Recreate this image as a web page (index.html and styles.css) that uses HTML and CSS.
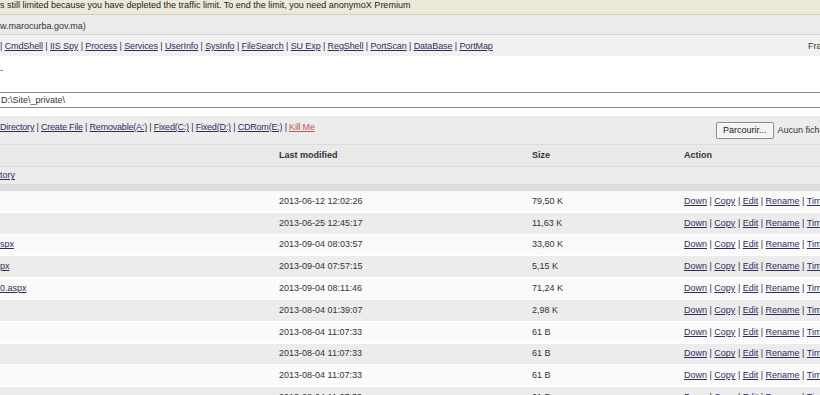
FILE: index.html
```html
<!DOCTYPE html>
<html lang="en">
<head>
    <meta charset="UTF-8">
    <title>File Manager</title>
    <link rel="stylesheet" href="styles.css">
</head>
<body>
    <div class="notice">s still limited because you have depleted the traffic limit. To end the limit, you need anonymoX Premium</div>
    <div class="host">w.marocurba.gov.ma)</div>

    <div class="nav">
        <div class="tight">| <a href="#">CmdShell</a> | <a href="#">IIS Spy</a> | <a href="#">Process</a> | <a href="#">Services</a> | <a href="#">UserInfo</a> | <a href="#">SysInfo</a> | <a href="#">FileSearch</a> | <a href="#">SU Exp</a> | <a href="#">RegShell</a> | <a href="#">PortScan</a> | <a href="#">DataBase</a> | <a href="#">PortMap</a></div>
        <div class="nowrap">Framework Ver : 2.0.50727</div>
    </div>

    <div class="blank">-</div>

    <div class="path">D:\Site\_private\</div>

    <div class="actions">
        <div class="tighter"><a href="#">Directory</a> | <a href="#">Create File</a> | <a href="#">Removable(A:)</a> | <a href="#">Fixed(C:)</a> | <a href="#">Fixed(D:)</a> | <a href="#">CDRom(E:)</a> | <a href="#" class="kill">Kill Me</a></div>
        <div class="upload"><button>Parcourir...</button><span>Aucun fichier sélectionné.</span></div>
    </div>

    <table class="files">
        <colgroup>
            <col class="c-name">
            <col class="c-date">
            <col class="c-size">
            <col class="c-act">
        </colgroup>
        <tr class="head">
            <td></td>
            <td>Last modified</td>
            <td>Size</td>
            <td>Action</td>
        </tr>
        <tr class="parent">
            <td colspan="4"><a href="#">tory</a></td>
        </tr>
        <tr class="sep"><td colspan="4"></td></tr>
        <tr class="odd">
            <td></td><td>2013-06-12 12:02:26</td><td>79,50 K</td>
            <td><a href="#">Down</a> | <a href="#">Copy</a> | <a href="#">Edit</a> | <a href="#">Rename</a> | <a href="#">Time</a></td>
        </tr>
        <tr class="even">
            <td></td><td>2013-06-25 12:45:17</td><td>11,63 K</td>
            <td><a href="#">Down</a> | <a href="#">Copy</a> | <a href="#">Edit</a> | <a href="#">Rename</a> | <a href="#">Time</a></td>
        </tr>
        <tr class="odd">
            <td><a href="#">spx</a></td><td>2013-09-04 08:03:57</td><td>33,80 K</td>
            <td><a href="#">Down</a> | <a href="#">Copy</a> | <a href="#">Edit</a> | <a href="#">Rename</a> | <a href="#">Time</a></td>
        </tr>
        <tr class="even">
            <td><a href="#">px</a></td><td>2013-09-04 07:57:15</td><td>5,15 K</td>
            <td><a href="#">Down</a> | <a href="#">Copy</a> | <a href="#">Edit</a> | <a href="#">Rename</a> | <a href="#">Time</a></td>
        </tr>
        <tr class="odd">
            <td><a href="#">0.aspx</a></td><td>2013-09-04 08:11:46</td><td>71,24 K</td>
            <td><a href="#">Down</a> | <a href="#">Copy</a> | <a href="#">Edit</a> | <a href="#">Rename</a> | <a href="#">Time</a></td>
        </tr>
        <tr class="even">
            <td></td><td>2013-08-04 01:39:07</td><td>2,98 K</td>
            <td><a href="#">Down</a> | <a href="#">Copy</a> | <a href="#">Edit</a> | <a href="#">Rename</a> | <a href="#">Time</a></td>
        </tr>
        <tr class="odd">
            <td></td><td>2013-08-04 11:07:33</td><td>61 B</td>
            <td><a href="#">Down</a> | <a href="#">Copy</a> | <a href="#">Edit</a> | <a href="#">Rename</a> | <a href="#">Time</a></td>
        </tr>
        <tr class="even">
            <td></td><td>2013-08-04 11:07:33</td><td>61 B</td>
            <td><a href="#">Down</a> | <a href="#">Copy</a> | <a href="#">Edit</a> | <a href="#">Rename</a> | <a href="#">Time</a></td>
        </tr>
        <tr class="odd">
            <td></td><td>2013-08-04 11:07:33</td><td>61 B</td>
            <td><a href="#">Down</a> | <a href="#">Copy</a> | <a href="#">Edit</a> | <a href="#">Rename</a> | <a href="#">Time</a></td>
        </tr>
        <tr class="even">
            <td></td><td>2013-08-04 11:07:33</td><td>61 B</td>
            <td><a href="#">Down</a> | <a href="#">Copy</a> | <a href="#">Edit</a> | <a href="#">Rename</a> | <a href="#">Time</a></td>
        </tr>
    </table>
</body>
</html>
```

FILE: styles.css
```css
html, body {
    overflow: hidden;
}
body {
    margin: 0;
    width: 900px;
    font-family: "Liberation Sans", Arial, sans-serif;
    font-size: 9px;
    line-height: 11px;
    color: #333;
    background: #fff;
}
a {
    color: #2e2e5c;
}
.nowrap {
    white-space: nowrap;
}
.tight {
    letter-spacing: -0.1px;
}
.tighter {
    letter-spacing: -0.2px;
}
.notice {
    height: 14px;
    background: #ece9d8;
    border-bottom: 1px solid #d3cfbd;
    color: #222;
}
.host {
    height: 13px;
    padding-top: 6px;
    background: #ebebeb;
    border-bottom: 1px solid #d8d8d8;
}
.nav {
    display: grid;
    grid-template-columns: 808px auto;
    height: 21px;
    padding-top: 6px;
    box-sizing: border-box;
    background: #f1f1f1;
}
.blank {
    height: 36px;
    padding-top: 9px;
    box-sizing: border-box;
}
.path {
    height: 16px;
    line-height: 14px;
    border-top: 1px solid #8a8a8a;
    border-bottom: 1px solid #8a8a8a;
    box-sizing: border-box;
    padding-left: 1px;
    margin-bottom: 8px;
}
.actions {
    display: grid;
    grid-template-columns: 716px auto;
    align-items: center;
    height: 28px;
    background: #ececec;
}
.actions > div:first-child {
    margin-top: -5px;
}
.kill {
    color: #c45555;
}
.upload {
    display: flex;
    align-items: center;
    white-space: nowrap;
}
.upload button {
    font: inherit;
    color: #222;
    height: 17px;
    padding: 0 6px;
    margin-top: 1px;
    background: #f4f4f4;
    border: 1px solid #888;
    border-radius: 2px;
    box-shadow: inset 0 0 0 1px #fff;
}
.upload span {
    margin-left: 4px;
}
.files {
    border-collapse: collapse;
    table-layout: fixed;
    width: 900px;
}
.c-name { width: 276px; }
.c-date { width: 253px; }
.c-size { width: 152px; }
.c-act { width: 219px; }
.files td {
    padding: 0 0 0 3px;
    white-space: nowrap;
    overflow: hidden;
}
.files td:first-child {
    padding-left: 0;
}
.head td {
    height: 21px;
    font-weight: bold;
    background: #e9e9e9;
    border-top: 1px solid #dcdcdc;
    border-bottom: 1px solid #dcdcdc;
}
.parent td {
    height: 17px;
    background: #ececec;
}
.sep td {
    height: 7px;
    background: #dddddd;
}
.odd td,
.even td {
    height: 20.8px;
    border-bottom: 1px solid #fff;
}
.odd td {
    background: #fafafa;
}
.even td {
    background: #ececec;
}
```
